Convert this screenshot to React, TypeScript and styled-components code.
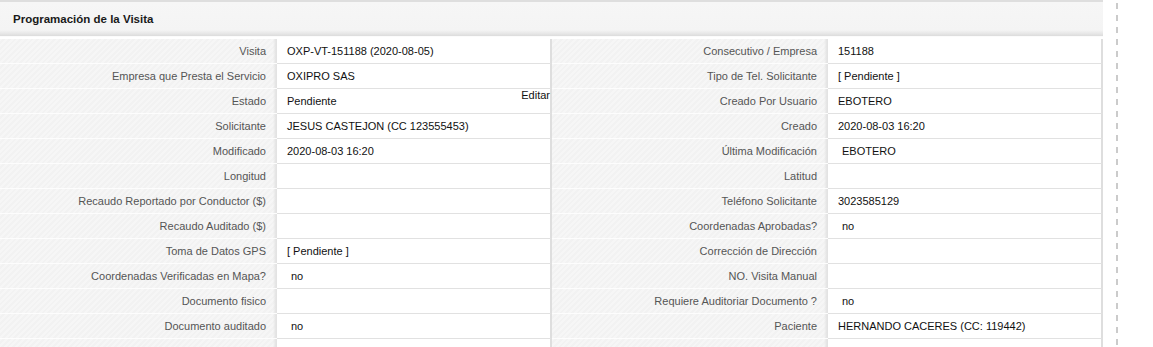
import React, { FC } from 'react';
import styled, { createGlobalStyle } from 'styled-components';

const GlobalStyle = createGlobalStyle`
  html, body {
    margin: 0;
    padding: 0;
    background: #fff;
  }
  body {
    font-family: "Liberation Sans", Arial, sans-serif;
    font-size: 11px;
    color: #222;
  }
`;

const Page = styled.div`
  display: flex;
  align-items: stretch;
  height: 347px;
  overflow: hidden;
`;

const Panel = styled.div`
  width: 1103px;
  flex: none;
`;

const PanelHeader = styled.div`
  height: 37px;
  border-top: 2px solid #dedede;
  border-bottom: 1px solid #fbfbfb;
  box-sizing: border-box;
  display: flex;
  align-items: center;
  padding: 0 13px 0;
  background: linear-gradient(
    to bottom,
    #f6f6f6 0,
    #f4f4f4 28px,
    #e9e9e9 31px,
    #dcdcdc 34px
  );
  font-weight: bold;
  font-size: 11.5px;
  color: #1a1a1a;
`;

const Grid = styled.div`
  display: grid;
  grid-template-columns: 277px 275px 276px 275px;
  grid-auto-rows: 25px;
  margin-top: 2px;
`;

const Label = styled.div`
  display: flex;
  align-items: center;
  justify-content: flex-end;
  padding-right: 11px;
  border-bottom: 1px solid #fdfdfd;
  color: #555;
  white-space: nowrap;
  background:
    linear-gradient(to right, rgba(230, 230, 230, 0) calc(100% - 4px), #e3e3e3 calc(100% - 1px)),
    repeating-linear-gradient(135deg, #f6f6f6 0 2px, #f2f2f2 2px 4px);
`;

const Value = styled.div<{ $indent?: boolean }>`
  position: relative;
  display: flex;
  align-items: center;
  padding-left: ${(p) => (p.$indent ? '14px' : '10px')};
  border-bottom: 1px solid #e1e1e1;
  border-right: 2px solid #dedede;
  background: #fff;
  color: #111;
  white-space: nowrap;
`;

const EditLink = styled.a`
  position: absolute;
  right: 0;
  top: 0;
  color: #111;
  text-decoration: none;
  cursor: pointer;
`;

const DashedRule = styled.div`
  width: 2px;
  margin-left: 13px;
  margin-top: 3px;
  background: repeating-linear-gradient(
    to bottom,
    #cbcbcb 0 6px,
    transparent 6px 12px
  );
`;

interface Field {
  label: string;
  value?: string;
  indent?: boolean;
  edit?: boolean;
}

const rows: [Field, Field][] = [
  [
    { label: 'Visita', value: 'OXP-VT-151188 (2020-08-05)' },
    { label: 'Consecutivo / Empresa', value: '151188' },
  ],
  [
    { label: 'Empresa que Presta el Servicio', value: 'OXIPRO SAS' },
    { label: 'Tipo de Tel. Solicitante', value: '[ Pendiente ]' },
  ],
  [
    { label: 'Estado', value: 'Pendiente', edit: true },
    { label: 'Creado Por Usuario', value: 'EBOTERO' },
  ],
  [
    { label: 'Solicitante', value: 'JESUS CASTEJON (CC 123555453)' },
    { label: 'Creado', value: '2020-08-03 16:20' },
  ],
  [
    { label: 'Modificado', value: '2020-08-03 16:20' },
    { label: 'Última Modificación', value: 'EBOTERO', indent: true },
  ],
  [{ label: 'Longitud' }, { label: 'Latitud' }],
  [
    { label: 'Recaudo Reportado por Conductor ($)' },
    { label: 'Teléfono Solicitante', value: '3023585129' },
  ],
  [
    { label: 'Recaudo Auditado ($)' },
    { label: 'Coordenadas Aprobadas?', value: 'no', indent: true },
  ],
  [
    { label: 'Toma de Datos GPS', value: '[ Pendiente ]' },
    { label: 'Corrección de Dirección' },
  ],
  [
    { label: 'Coordenadas Verificadas en Mapa?', value: 'no', indent: true },
    { label: 'NO. Visita Manual' },
  ],
  [
    { label: 'Documento fisico' },
    { label: 'Requiere Auditoriar Documento ?', value: 'no', indent: true },
  ],
  [
    { label: 'Documento auditado', value: 'no', indent: true },
    { label: 'Paciente', value: 'HERNANDO CACERES (CC: 119442)' },
  ],
  [{ label: '' }, { label: '' }],
];

const FieldCells: FC<{ field: Field }> = ({ field }) => (
  <>
    <Label>{field.label}</Label>
    <Value $indent={field.indent}>
      {field.value}
      {field.edit && <EditLink>Editar</EditLink>}
    </Value>
  </>
);

const App: FC = () => {
  return (
    <>
      <GlobalStyle />
      <Page>
        <Panel>
          <PanelHeader>Programación de la Visita</PanelHeader>
          <Grid>
            {rows.map(([left, right], i) => (
              <React.Fragment key={i}>
                <FieldCells field={left} />
                <FieldCells field={right} />
              </React.Fragment>
            ))}
          </Grid>
        </Panel>
        <DashedRule />
      </Page>
    </>
  );
};

export default App;
